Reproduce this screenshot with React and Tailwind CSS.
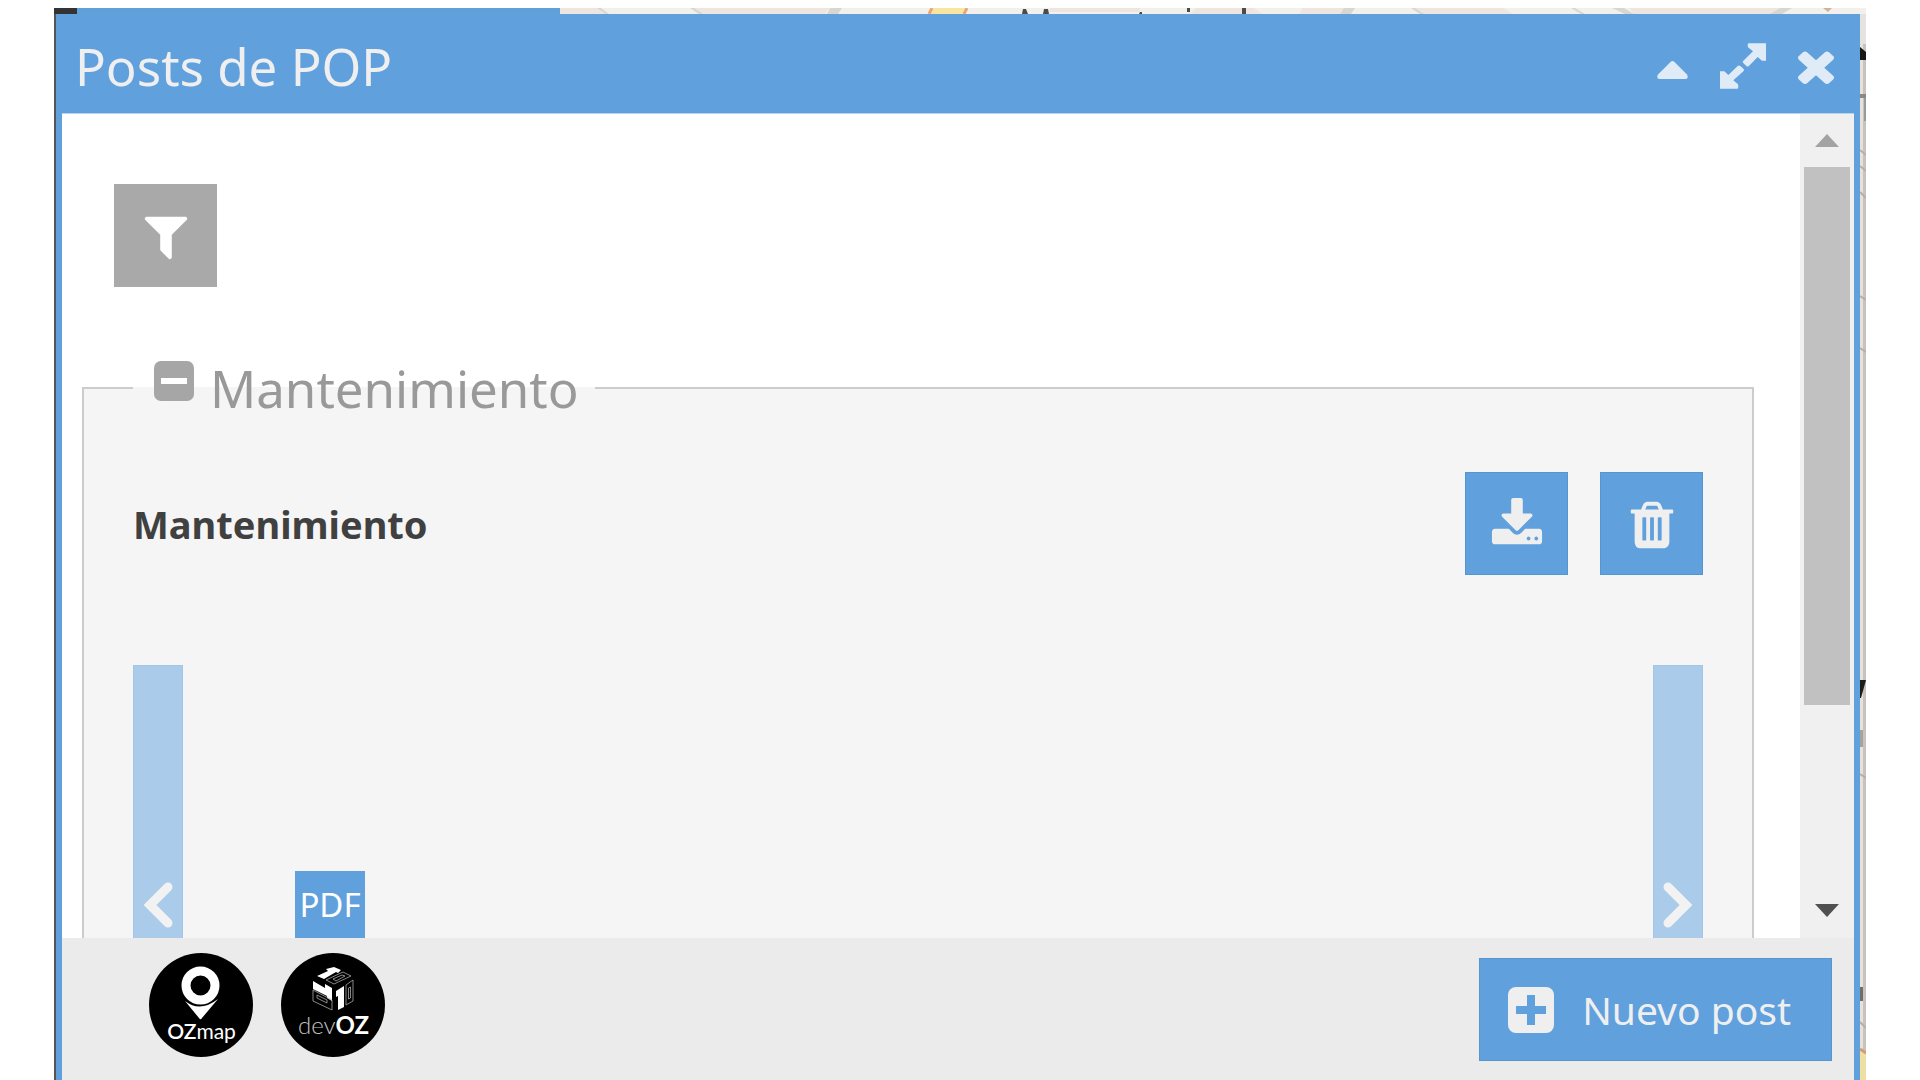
import { useState } from "react";

// Shared 54px glyph, 1792 unit grid
function Glyph({ d }) {
  return (
    <svg viewBox="0 0 1792 1792" className="h-[54px] w-[54px]" fill="currentColor" aria-hidden="true">
      <path d={d} />
    </svg>
  );
}

const FILTER =
  "M1595 295q17 41-14 70l-493 493v742q0 42-39 59-13 5-25 5-27 0-45-19l-256-256q-19-19-19-45v-486l-493-493q-31-29-14-70 17-39 59-39h1280q42 0 59 39z";
const DOWNLOAD =
  "M1344 1344q0-26-19-45t-45-19-45 19-19 45 19 45 45 19 45-19 19-45zm256 0q0-26-19-45t-45-19-45 19-19 45 19 45 45 19 45-19 19-45zm128-224v320q0 40-28 68t-68 28h-1472q-40 0-68-28t-28-68v-320q0-40 28-68t68-28h465l135 136q58 56 136 56t136-56l136-136h464q40 0 68 28t28 68zm-325-569q17 41-14 70l-448 448q-18 19-45 19t-45-19l-448-448q-31-29-14-70 17-39 59-39h256v-448q0-26 19-45t45-19h256q26 0 45 19t19 45v448h256q42 0 59 39z";
const TRASH =
  "M704 1376v-704q0-14-9-23t-23-9h-64q-14 0-23 9t-9 23v704q0 14 9 23t23 9h64q14 0 23-9t9-23zm256 0v-704q0-14-9-23t-23-9h-64q-14 0-23 9t-9 23v704q0 14 9 23t23 9h64q14 0 23-9t9-23zm256 0v-704q0-14-9-23t-23-9h-64q-14 0-23 9t-9 23v704q0 14 9 23t23 9h64q14 0 23-9t9-23zm-544-992h448l-48-117q-7-9-17-11h-317q-10 2-17 11zm928 32v64q0 14-9 23t-23 9h-96v948q0 83-47 143.500t-113 60.500h-832q-66 0-113-58.500t-47-141.500v-952h-96q-14 0-23-9t-9-23v-64q0-14 9-23t23-9h309l70-167q15-37 54-63t79-26h320q40 0 79 26t54 63l70 167h309q14 0 23 9t9 23z";

function MapTop() {
  return (
    <svg viewBox="0 0 1306 6" preserveAspectRatio="xMinYMin slice" className="h-full min-w-0 flex-1" aria-hidden="true">
      <rect width="1306" height="6" fill="#f3f0ec" />
      <g fill="#ede5de">
        <path d="M0 0h37l10 6H0zM132 0h137l-4 6H140zM490 0h90v4h-90zM636 0h58l8 6h-72zM742 0h42l-4 6h-40zM855 0h88l10 6h-90zM1070 0h150l-10 6h-136z" />
      </g>
      <g fill="#d9d5cf">
        <path d="M37 0h4l8 6h-3zM130 0h4l9 6h-4zM270 0h12l-4 6h-11zM784 0h11l-4 6h-11zM851 0h4l9 6h-4zM1011 0h4l10 6h-4zM1052 0h12l10 6h-9zM1220 0h12l-10 6h-12z" />
      </g>
      <path d="M372 0h36l-4 6h-36z" fill="#f8e6a0" />
      <path d="M372 0l-3 6M407 0l-3 6" stroke="#eca679" strokeWidth="3" />
      <path d="M462 6l1-5h3l2 5zM483 6l1-5h4l1 5zM579 6l1-2h2v2zM627 0h3v4h-3zM682 0h4v6h-4z" fill="#4b4b4b" />
      <path d="M1263 0h9l-4 4z" fill="#d0b294" />
    </svg>
  );
}

function MapSide() {
  return (
    <svg viewBox="0 0 6 1066" preserveAspectRatio="xMinYMin slice" className="h-full w-[6px] shrink-0" aria-hidden="true">
      <rect width="6" height="1066" fill="#e6e1db" />
      <rect x="3" width="3" height="1066" fill="#c8c2bc" />
      <path d="M0 0h6v30H0z" fill="#e5e3e1" />
      <path d="M0 33l6 5v8H0z" fill="#161616" />
      <path d="M0 80h6v4H0z" fill="#8b8987" />
      <path d="M4 84h2v23H4z" fill="#9a9a9a" />
      <path d="M0 136l6 5M0 152l6 5M0 178l6 6M0 282l6 4M0 334l6 4M0 760l6 4M0 1008l6 6" stroke="#b4b0ac" strokeWidth="2" />
      <path d="M0 666h6l-5 18H0z" fill="#1c1c1c" />
      <path d="M0 716h3v17H0z" fill="#a5a3a1" />
      <path d="M0 973h3v14H0z" fill="#6e6e6e" />
      <path d="M0 1036l6 4v26H0z" fill="#eee0a3" />
      <path d="M0 1035l6 4" stroke="#d69a74" strokeWidth="3" />
    </svg>
  );
}

function TitleBar({ onToggle }) {
  return (
    <header className="flex h-[99px] shrink-0 items-center justify-between pl-[13px] pr-5 pt-1 text-[#dfebf7]">
      <h1 className="text-[51px] leading-[70px] text-[#efefef]">Posts de POP</h1>
      <div className="flex items-center gap-8">
        <button type="button" aria-label="Contraer" onClick={onToggle}>
          <svg viewBox="0 0 31 18" className="mt-2 h-[18px] w-[31px]" fill="currentColor">
            <path d="M13.500 1q2-2 4 0L30 13.500q2 4-1.500 4.500H2.500Q-1 17.500 1 13.500z" />
          </svg>
        </button>
        <button type="button" aria-label="Maximizar">
          <svg viewBox="483 133 138 136" className="h-[46px] w-[46px]" fill="currentColor">
            <path d="M568 133H621V185H609L596 174 569 202Q565 204 562 201L552 191Q550 188 553 185L582 157 567 145Q564 136 568 133z" />
            <path d="M483 217H496L508 228 536 201Q540 198 544 201L554 210Q556 213 554 216L523 244 537 256Q540 266 536 269H483z" />
          </svg>
        </button>
        <button type="button" aria-label="Cerrar">
          <svg viewBox="110 238 1188 1316" className="h-9 w-9" preserveAspectRatio="none" fill="currentColor">
            <path d="M1298 1322q0 40-28 68l-136 136q-28 28-68 28t-68-28l-294-294-294 294q-28 28-68 28t-68-28l-136-136q-28-28-28-68t28-68l294-294-294-294q-28-28-28-68t28-68l136-136q28-28 68-28t68 28l294 294 294-294q28-28 68-28t68 28l136 136q28 28 28 68t-28 68l-294 294 294 294q28 28 28 68z" />
          </svg>
        </button>
      </div>
    </header>
  );
}

function IconButton({ label, d }) {
  return (
    <button
      type="button"
      aria-label={label}
      className="flex h-[103px] w-[103px] items-center justify-center border border-[#5596d1] bg-[#5fa0dd] pt-0.5 text-[#efefef]"
    >
      <Glyph d={d} />
    </button>
  );
}

function SlideButton({ label, points }) {
  return (
    <button
      type="button"
      aria-label={label}
      className="flex h-[480px] w-[50px] items-center justify-center border border-[#a3c6e8] bg-[#abcbea]"
    >
      <svg viewBox="0 0 30 46" className="h-[46px] w-[30px]" fill="none" stroke="#f2f2f2" strokeWidth="9" strokeLinecap="round">
        <polyline points={points} />
      </svg>
    </button>
  );
}

function Scrollbar() {
  return (
    <div className="flex w-[54px] shrink-0 flex-col items-center bg-[#f0f0f0] px-1" aria-hidden="true">
      <svg viewBox="0 0 24 13" className="mb-5 mt-5 h-[13px] w-6 shrink-0" fill="#a3a3a3">
        <path d="M12 0L24 13H0z" />
      </svg>
      <div className="flex min-h-0 w-full flex-1 flex-col">
        <div className="h-[73%] w-full bg-[#c1c1c1]" />
      </div>
      <svg viewBox="0 0 24 13" className="mb-[21px] h-[13px] w-6 shrink-0" fill="#505050">
        <path d="M0 0H24L12 13z" />
      </svg>
    </div>
  );
}

function OzMapLogo() {
  return (
    <svg viewBox="0 0 104 104" className="h-[104px] w-[104px]" role="img" aria-label="OZmap">
      <circle cx="52" cy="52" r="52" />
      <circle cx="51.500" cy="32.500" r="14.500" fill="none" stroke="#fff" strokeWidth="9" />
      <path d="M36 48Q51 60 69 46L53 65Q51.500 67.500 50 65z" fill="#fff" />
      <text x="52.500" y="86" textAnchor="middle" fill="#fff" fontSize="21" fontFamily="Lato, sans-serif">
        <tspan fontWeight="600">OZ</tspan>
        <tspan fontWeight="400">map</tspan>
      </text>
    </svg>
  );
}

function DevOzLogo() {
  return (
    <svg viewBox="0 0 104 104" className="h-[104px] w-[104px]" role="img" aria-label="devOZ">
      <circle cx="52" cy="52" r="52" />
      <g fill="#fff">
        <path d="M36 23L47 18 45 16 53 14 60 17 57 20 55 19 43 26z" />
        <path d="M32 28L44 35 44 31 51 35V48L46 45V43L32 36z" />
        <path d="M55 38L63 33V54L57 57V43L55 44z" />
      </g>
      <g fill="none" stroke="#a8a8a8" strokeWidth="0.8">
        <path d="M45 27L62 19 70 23 53 31zM52 26L61 22 64 23 55 28z" />
        <path d="M32 37L51 47V57L32 48zM36 42L46 47V50L36 45z" />
        <path d="M65 32L72 27V48L65 52zM67.500 35L69.500 34V45L67.500 46z" />
      </g>
      <text x="52.500" y="81" textAnchor="middle" fill="#fff" fontSize="24" fontFamily="Lato, sans-serif">
        <tspan fontWeight="300" fill="#c4c4c4">dev</tspan>
        <tspan fontWeight="700">OZ</tspan>
      </text>
    </svg>
  );
}

export default function App() {
  const [minimized, setMinimized] = useState(false);
  const [open, setOpen] = useState(true);

  return (
    <div className="flex h-screen flex-col overflow-hidden bg-white px-[54px] pt-2 font-['Noto_Sans','Open_Sans',sans-serif]">
      <div className="flex h-[6px] shrink-0">
        <div className="w-[23px] bg-[#333333]" />
        <div className="w-[483px] bg-[#5fa0da]" />
        <MapTop />
      </div>

      <div className="flex min-h-0 flex-1">
        <div className="w-[2px] shrink-0 bg-[#555555]" />

        <section className="flex min-w-0 flex-1 flex-col border-x-[6px] border-[#5fa0dd] bg-[#5fa0dd]">
          <TitleBar onToggle={() => setMinimized(!minimized)} />

          {!minimized && (
            <div className="flex min-h-0 flex-1 border-t border-[#b5d4f0] bg-white">
              <div className="min-w-0 flex-1 overflow-hidden pl-5 pr-[46px] pt-[70px]">
                <button
                  type="button"
                  aria-label="Filtrar"
                  className="ml-8 flex h-[103px] w-[103px] items-center justify-center bg-[#a9a9a9] text-white"
                >
                  <Glyph d={FILTER} />
                </button>

                <fieldset className="mt-[66px] min-w-0 border-2 border-[#cccccc] bg-[#f5f5f5] px-[49px] pb-12">
                  <legend className="pl-[21px] pr-4">
                    <button type="button" onClick={() => setOpen(!open)} className="flex items-center gap-4 text-[#999999]">
                      <svg viewBox="0 0 40 40" className="mb-[14px] h-10 w-10" aria-hidden="true">
                        <rect width="40" height="40" rx="7" fill="#a6a6a6" />
                        <rect x="7" y="17" width="26" height="6" fill="#fff" />
                      </svg>
                      <span className="text-[51px] leading-[70px]">Mantenimiento</span>
                    </button>
                  </legend>

                  {open && (
                    <>
                      <div className="flex items-center justify-between pt-[49px]">
                        <h2 className="text-[38px] font-bold leading-[52px] text-[#404040]">Mantenimiento</h2>
                        <div className="flex gap-8">
                          <IconButton label="Descargar" d={DOWNLOAD} />
                          <IconButton label="Eliminar" d={TRASH} />
                        </div>
                      </div>

                      <div className="mt-[90px] flex">
                        <SlideButton label="Anterior" points="25,5 7,23 25,41" />
                        <div className="flex flex-1 items-center pl-28">
                          <a
                            href="#pdf"
                            className="flex h-[68px] w-[70px] items-center justify-center bg-[#5fa0dd] text-[33px] leading-[44px] text-white"
                          >
                            PDF
                          </a>
                        </div>
                        <SlideButton label="Siguiente" points="5,5 23,23 5,41" />
                      </div>
                    </>
                  )}
                </fieldset>
              </div>
              <Scrollbar />
            </div>
          )}

          <footer className="flex h-[142px] shrink-0 items-start justify-between bg-[#ebebeb] pl-[87px] pr-[22px]">
            <div className="flex gap-7 pt-[15px]">
              <OzMapLogo />
              <DevOzLogo />
            </div>
            <button
              type="button"
              className="mt-5 flex h-[103px] items-center gap-7 border border-[#5596d1] bg-[#5fa0dd] pl-7 pr-10 text-[39px] leading-[52px] text-[#efefef]"
            >
              <svg viewBox="0 0 46 46" className="h-[46px] w-[46px]" aria-hidden="true">
                <rect width="46" height="46" rx="8" fill="#efefef" />
                <path d="M19 8h8v11h11v8H27v11h-8V27H8v-8h11z" fill="#5fa0dd" />
              </svg>
              Nuevo post
            </button>
          </footer>
        </section>

        <MapSide />
      </div>
    </div>
  );
}
